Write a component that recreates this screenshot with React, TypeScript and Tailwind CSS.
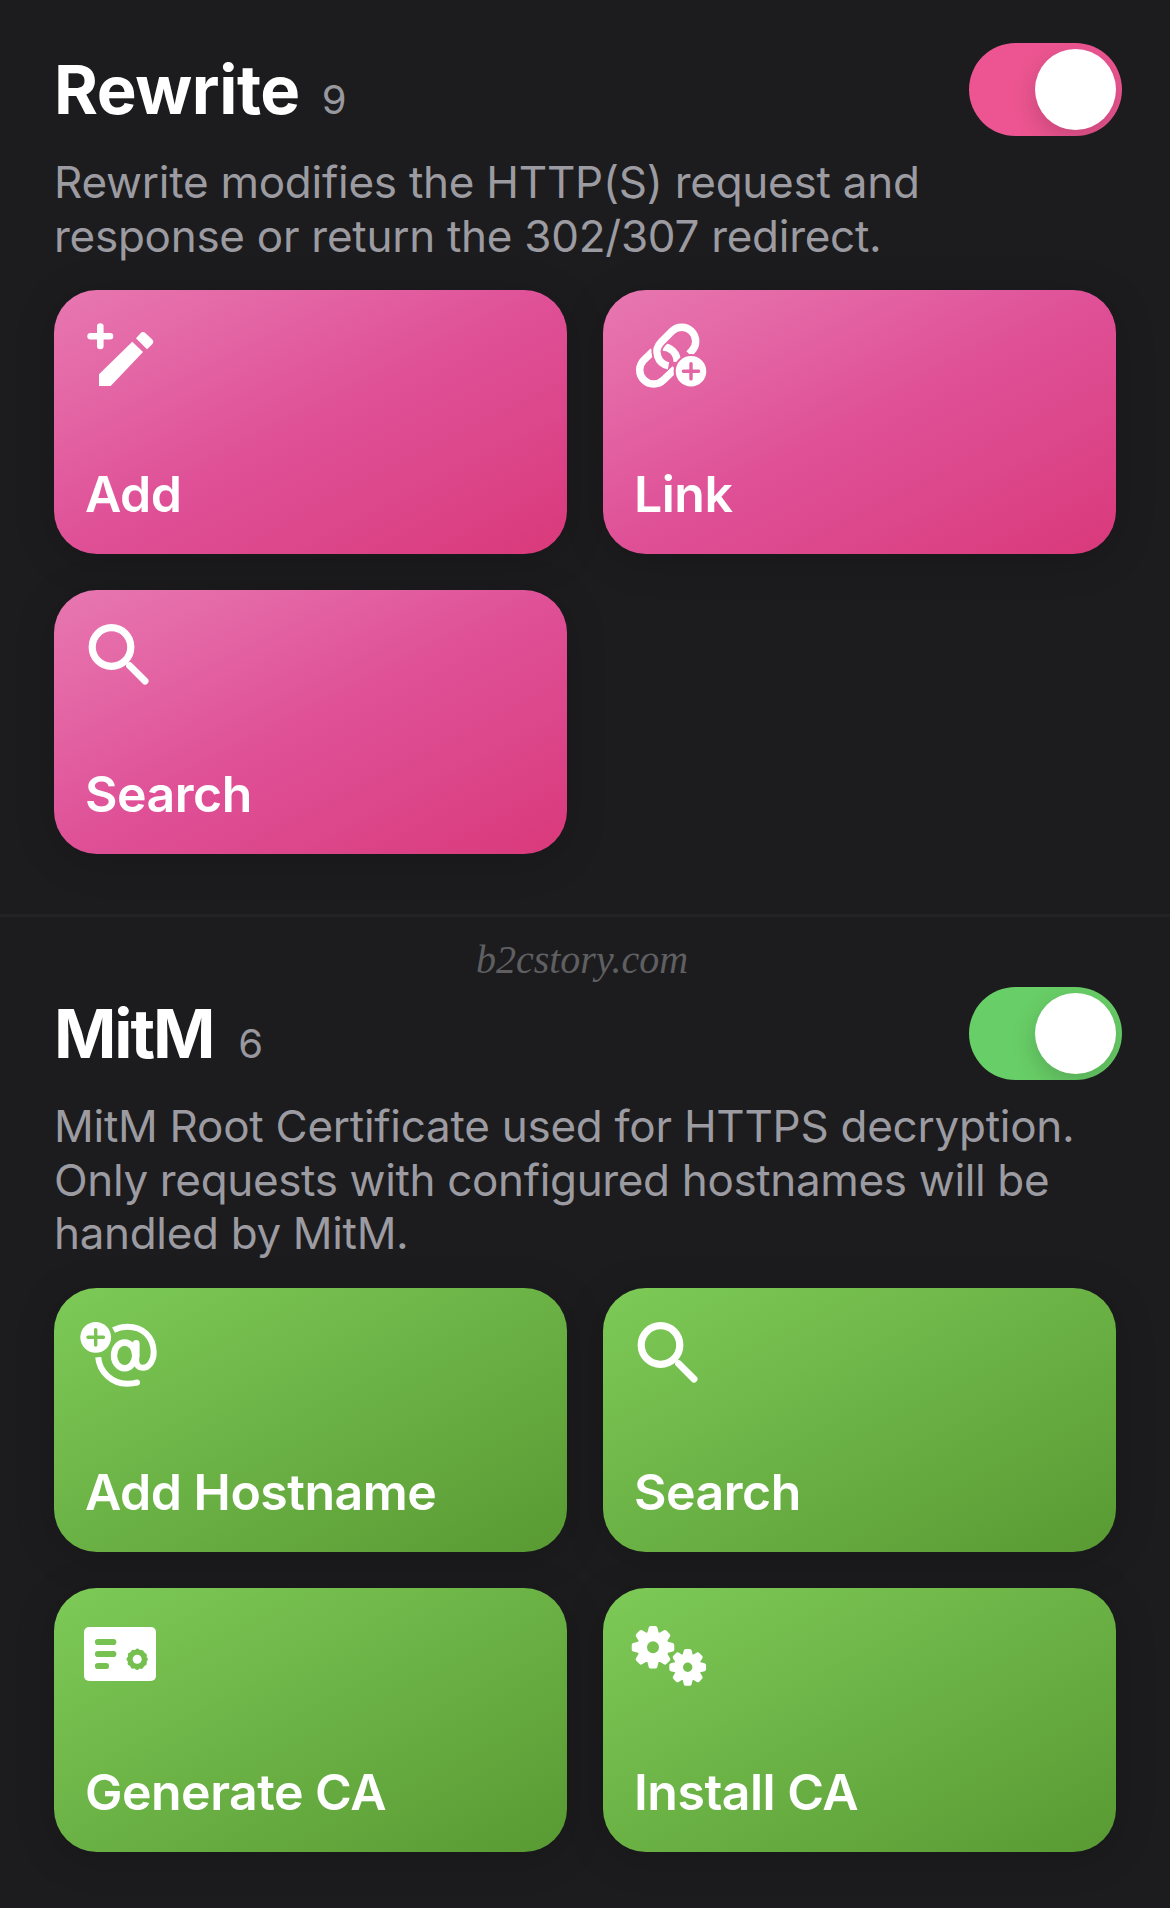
import type { ReactNode } from "react";

function IconFrame({ children }: { children: ReactNode }) {
  return (
    <svg width="88" height="84" viewBox="0 0 88 84" fill="none" className="block text-white">
      {children}
    </svg>
  );
}

function AddIcon() {
  return (
    <IconFrame>
      <path d="M14.6 24.3H34M24.3 14.6V34" stroke="currentColor" strokeWidth="6.6" strokeLinecap="round" />
      <path d="M23 74V62.3L56.3 29.7L67 40L34.7 74Z" fill="currentColor" />
      <path d="M60 26.3L64.5 21.3Q66.8 18.9 69.3 21L75.8 27.1Q78.6 29.6 76.2 32.2L71 37.3Z" fill="currentColor" />
    </IconFrame>
  );
}

function LinkIcon() {
  return (
    <IconFrame>
      <mask id="link-lower" maskUnits="userSpaceOnUse" x="0" y="0" width="88" height="84">
        <rect width="88" height="84" fill="white" />
        <path d="M66.6 39.2A14 14 0 0 0 46.8 19.4L36.1 30.1A14 14 0 0 0 43.5 53.8" stroke="black" strokeWidth="11" />
        <circle cx="66" cy="59.3" r="17.4" fill="black" />
      </mask>
      <mask id="link-upper" maskUnits="userSpaceOnUse" x="0" y="0" width="88" height="84">
        <rect width="88" height="84" fill="white" />
        <circle cx="66" cy="59.3" r="17.4" fill="black" />
      </mask>
      <mask id="link-badge" maskUnits="userSpaceOnUse" x="0" y="0" width="88" height="84">
        <rect width="88" height="84" fill="white" />
        <path d="M58.4 59.3H73.6M66 51.7V66.9" stroke="black" strokeWidth="3.4" strokeLinecap="round" />
      </mask>
      <g mask="url(#link-lower)" stroke="currentColor" strokeWidth="7.4">
        <path d="M28.1 39.1L18.8 48.1A14 14 0 0 0 38.6 67.9L50 56.8" />
        <path d="M37 35A14 14 0 0 1 52 50" />
      </g>
      <path
        mask="url(#link-upper)"
        d="M64 41.8L66.6 39.2A14 14 0 0 0 46.8 19.4L36.1 30.1A14 14 0 0 0 43.5 53.8"
        stroke="currentColor"
        strokeWidth="7.4"
      />
      <circle mask="url(#link-badge)" cx="66" cy="59.3" r="15.3" fill="currentColor" />
    </IconFrame>
  );
}

function SearchIcon() {
  return (
    <IconFrame>
      <circle cx="35.5" cy="35" r="19.3" stroke="currentColor" strokeWidth="7.2" />
      <path d="M53.6 53.6L69 69" stroke="currentColor" strokeWidth="7" strokeLinecap="round" />
    </IconFrame>
  );
}

function HostnameIcon() {
  return (
    <IconFrame>
      <mask id="host-badge" maskUnits="userSpaceOnUse" x="0" y="0" width="88" height="84">
        <rect width="88" height="84" fill="white" />
        <path d="M12 27.3H27.4M19.7 19.6V35" stroke="black" strokeWidth="3.4" strokeLinecap="round" />
      </mask>
      <circle mask="url(#host-badge)" cx="19.7" cy="27.3" r="15.4" fill="currentColor" />
      <g stroke="currentColor" strokeWidth="6">
        <ellipse cx="48.6" cy="45.4" rx="10.6" ry="12.9" strokeWidth="6.4" />
        <path d="M60.2 33V50C60.2 55.5 63 57.8 66.5 57.8C73.5 57.8 77.7 50 77.7 42.5C77.7 27 67 16.7 51.5 16.7C46 16.7 41.5 18 37.5 20.2" />
        <path d="M60.2 33.4V46" strokeWidth="6.6" strokeLinecap="round" />
        <path d="M22.2 47.2C23.5 62 36 73.7 51 73.7C55 73.7 58.5 73.3 61 72.5" />
        <path d="M60.8 72.6H61" strokeLinecap="round" />
      </g>
    </IconFrame>
  );
}

function CertificateIcon() {
  return (
    <IconFrame>
      <mask id="certificate" maskUnits="userSpaceOnUse" x="0" y="0" width="88" height="84">
        <rect width="88" height="84" fill="white" />
        <path d="M22 32H37.3M22 44H37.3M22 56H30" stroke="black" strokeWidth="6.2" strokeLinecap="round" />
        <circle cx="61.2" cy="49.3" r="9.9" fill="black" />
        <circle cx="61.2" cy="49.3" r="8.6" stroke="black" strokeWidth="4.2" strokeLinecap="round" strokeDasharray="0 4.503" />
        <circle cx="61.2" cy="49.3" r="4.5" fill="white" />
      </mask>
      <rect mask="url(#certificate)" x="8" y="17" width="72" height="54" rx="5" fill="currentColor" />
    </IconFrame>
  );
}

function gearPath(cx: number, cy: number, outer: number, inner: number, hole: number) {
  const at = (r: number, deg: number) => {
    const a = (deg * Math.PI) / 180;
    return `${(cx + r * Math.cos(a)).toFixed(2)} ${(cy + r * Math.sin(a)).toFixed(2)}`;
  };
  const points: string[] = [];
  for (let tooth = 0; tooth < 8; tooth++) {
    const c = tooth * 45;
    points.push(at(inner, c - 16), at(outer, c - 7), at(outer, c + 7), at(inner, c + 16));
  }
  const ring = `M${cx - hole} ${cy}a${hole} ${hole} 0 1 0 ${hole * 2} 0a${hole} ${hole} 0 1 0 ${-hole * 2} 0Z`;
  return `M${points.join("L")}Z${ring}`;
}

function GearsIcon() {
  return (
    <IconFrame>
      <g fill="currentColor" fillRule="evenodd" stroke="currentColor" strokeWidth="4" strokeLinejoin="round">
        <path d={gearPath(28, 37.3, 19.4, 14, 8)} />
        <path d={gearPath(62.7, 57.3, 16.5, 11.8, 6.7)} />
      </g>
    </IconFrame>
  );
}

function Switch({ color }: { color: string }) {
  return (
    <button
      role="switch"
      aria-checked="true"
      className={`flex h-[93px] w-[153px] shrink-0 items-center justify-end overflow-hidden rounded-full p-[6px] ${color}`}
    >
      <span className="size-[81px] rounded-full bg-white shadow-[0_9px_24px_rgba(0,0,0,0.17)]" />
    </button>
  );
}

const pink = "bg-linear-to-br from-[#e777b1] via-[#df5097] to-[#d9397b]";
const green = "bg-linear-to-br from-[#7dca57] to-[#599a33]";

function Card({ icon, label, tone }: { icon: ReactNode; label: string; tone: string }) {
  return (
    <button
      className={`flex h-[264px] flex-col items-start justify-between rounded-[43px] pt-[22px] pb-[30px] pl-[22px] shadow-[0_6px_40px_rgba(0,0,0,0.17)] ${tone}`}
    >
      {icon}
      <span className="ml-[9px] text-[50px] leading-[60px] font-semibold tracking-[-0.5px] whitespace-nowrap text-white">
        {label}
      </span>
    </button>
  );
}

type HeaderProps = { title: string; titleClass: string; count: number; switchColor: string };

function Header({ title, titleClass, count, switchColor }: HeaderProps) {
  return (
    <header className="flex h-[93px] justify-between pr-[48px] pl-[54px]">
      <div className="flex items-baseline leading-[93px]">
        <h2 className={`text-[67px] font-bold text-white ${titleClass}`}>{title}</h2>
        <span className="text-[40px] text-[#98989e]">{count}</span>
      </div>
      <Switch color={switchColor} />
    </header>
  );
}

function Description({ children }: { children: ReactNode }) {
  return <p className="mt-5 pl-[54px] text-[44px] leading-[53.5px] whitespace-nowrap text-[#9b9ba1]">{children}</p>;
}

export default function App() {
  return (
    <main className="h-[1908px] w-[1170px] overflow-hidden bg-[#1c1c1e] font-['Inter',sans-serif]">
      <section className="h-[917px] border-b-[3px] border-[#232326] pt-[43px]">
        <Header title="Rewrite" titleClass="mr-[22px] tracking-[-0.43px]" count={9} switchColor="bg-[#ec5591]" />
        <Description>
          <span className="block tracking-[-0.25px]">Rewrite modifies the HTTP(S) request and</span>
          <span className="block tracking-[-0.27px]">response or return the 302/307 redirect.</span>
        </Description>
        <div className="mt-[27px] grid grid-cols-2 gap-9 px-[54px]">
          <Card tone={pink} icon={<AddIcon />} label="Add" />
          <Card tone={pink} icon={<LinkIcon />} label="Link" />
          <Card tone={pink} icon={<SearchIcon />} label="Search" />
        </div>
      </section>
      <section>
        <div className="flex h-[70px] items-start justify-center pt-[20px] pr-[6px] font-['Liberation_Serif',serif] text-[40px] leading-[46px] text-[#5f5f62] italic">
          b2cstory.com
        </div>
        <Header title="MitM" titleClass="mr-[25px] tracking-[-2.1px]" count={6} switchColor="bg-[#68ce67]" />
        <Description>
          <span className="block tracking-[-0.26px]">MitM Root Certificate used for HTTPS decryption.</span>
          <span className="block tracking-[-0.35px]">Only requests with configured hostnames will be</span>
          <span className="block tracking-[-0.33px]">handled by MitM.</span>
        </Description>
        <div className="mt-[27.5px] grid grid-cols-2 gap-9 px-[54px]">
          <Card tone={green} icon={<HostnameIcon />} label="Add Hostname" />
          <Card tone={green} icon={<SearchIcon />} label="Search" />
          <Card tone={green} icon={<CertificateIcon />} label="Generate CA" />
          <Card tone={green} icon={<GearsIcon />} label="Install CA" />
        </div>
      </section>
    </main>
  );
}
